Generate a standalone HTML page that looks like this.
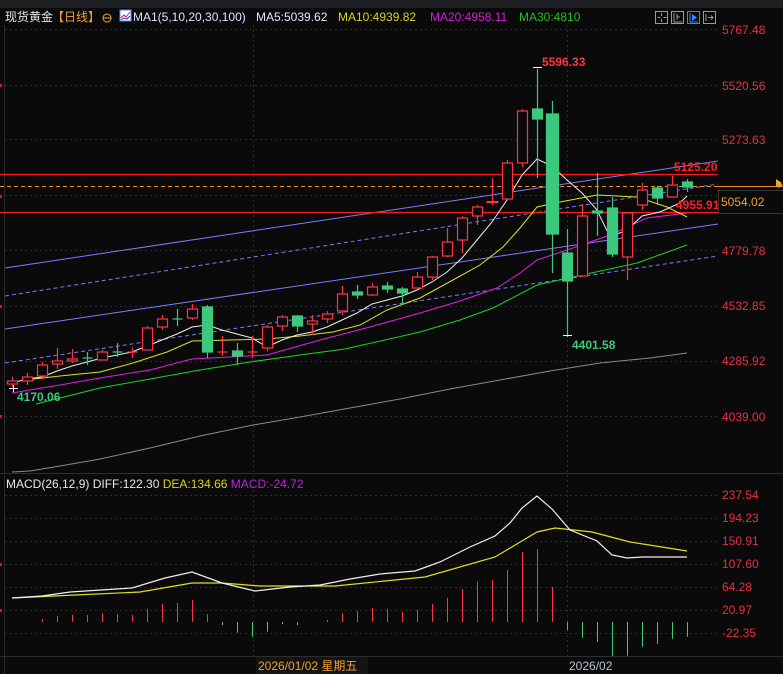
<!DOCTYPE html>
<html><head><meta charset="utf-8"><style>
html,body{margin:0;padding:0;background:#0a0a0a;width:783px;height:674px;overflow:hidden}
svg{display:block}
text{font-family:"Liberation Sans","Noto Sans CJK SC",sans-serif}
</style></head><body>
<svg width="783" height="674" viewBox="0 0 783 674" xmlns="http://www.w3.org/2000/svg">
<rect width="783" height="674" fill="#0a0a0a"/>
<rect width="783" height="8" fill="#1e1f22"/>
<!-- grid -->
<g stroke="#2c2c2c" stroke-dasharray="2,3" stroke-width="1">
<line x1="5" y1="29.5" x2="718" y2="29.5"/><line x1="5" y1="85.5" x2="718" y2="85.5"/><line x1="5" y1="139.5" x2="718" y2="139.5"/><line x1="5" y1="195.5" x2="718" y2="195.5"/><line x1="5" y1="250.5" x2="718" y2="250.5"/><line x1="5" y1="306.5" x2="718" y2="306.5"/><line x1="5" y1="361.5" x2="718" y2="361.5"/><line x1="5" y1="416.5" x2="718" y2="416.5"/>
<line x1="5" y1="495.5" x2="718" y2="495.5"/><line x1="5" y1="518.5" x2="718" y2="518.5"/><line x1="5" y1="541.5" x2="718" y2="541.5"/><line x1="5" y1="564.5" x2="718" y2="564.5"/><line x1="5" y1="587.5" x2="718" y2="587.5"/><line x1="5" y1="610.5" x2="718" y2="610.5"/><line x1="5" y1="633.5" x2="718" y2="633.5"/>
<line x1="253.5" y1="25" x2="253.5" y2="656"/><line x1="567.5" y1="25" x2="567.5" y2="656"/>
</g>
<line x1="4.5" y1="25" x2="4.5" y2="674" stroke="#2a2a2a"/>
<line x1="0" y1="473.5" x2="783" y2="473.5" stroke="#2e2e2e"/>
<line x1="0" y1="656.5" x2="783" y2="656.5" stroke="#2e2e2e"/>
<g fill="#c02030"><rect x="0" y="84" width="2" height="3"/><rect x="0" y="195" width="2" height="3"/><rect x="0" y="305" width="2" height="3"/><rect x="0" y="415" width="2" height="3"/><rect x="0" y="563" width="2" height="3"/><rect x="0" y="609" width="2" height="3"/></g>

<!-- channel lines -->
<g stroke="#7b7bff" stroke-width="1" fill="none">
<line x1="5" y1="268" x2="718" y2="161"/>
<line x1="5" y1="329" x2="718" y2="224"/>
<line x1="5" y1="296" x2="718" y2="184" stroke-dasharray="4,3"/>
<line x1="5" y1="363" x2="718" y2="256" stroke-dasharray="4,3"/>
</g>
<line x1="0" y1="174.5" x2="718" y2="174.5" stroke="#ff1a1a" stroke-width="1.2"/>
<line x1="0" y1="212.5" x2="718" y2="212.5" stroke="#ff1a1a" stroke-width="1.2"/>
<line x1="0" y1="186.5" x2="718" y2="186.5" stroke="#f08a20" stroke-dasharray="4,3"/>
<line x1="718" y1="186.5" x2="783" y2="186.5" stroke="#f08a20"/>

<!-- MAs -->
<g fill="none" stroke-width="1">
<polyline stroke="#8a8a8a" points="12,472 30,471 60,466 100,459 150,448 200,436 253,425 300,417 350,408 400,399 450,389 500,380 550,371 600,363 650,358 687,353"/>
<polyline stroke="#22d022" points="36,404 100,388 150,379 200,370 250,362 300,355 345,349 420,332 460,320 493,308 537,285 573,277 637,263 687,245"/>
<polyline stroke="#e020e0" points="12,393 60,385 100,378 150,370 192,359 267,355 320,340 370,327 420,313 460,301 497,288 520,273 537,260 573,248 610,235 647,218 687,213"/>
<polyline stroke="#e0e020" points="25,380 60,376 100,372 133,363 167,352 192,341 230,340 267,339 300,336 333,332 360,325 387,310 420,298 453,280 480,265 503,247 520,228 537,207 560,202 597,195 637,197 667,207 687,217"/>
<polyline stroke="#f0f0f0" points="12,383 27,379 42,377 57,371 72,366 87,362 102,358 117,355 132,352 147,346 162,340 177,334 192,327 207,325 222,330 237,334 252,338 267,347 282,340 297,335 312,332 327,327 342,320 357,313 372,304 387,300 402,296 417,290 432,282 447,272 462,258 477,240 492,222 507,200 522,175 537,159 552,166 567,180 582,193 597,210 610,237 627,230 642,216 660,212 680,203 687,196"/>
</g>

<!-- candles -->
<g stroke-width="1.2">
<g stroke="#ff3344" fill="#0a0a0a">
<line x1="12.5" y1="377" x2="12.5" y2="387"/><rect x="7.5" y="381" width="10" height="3"/>
<line x1="27.5" y1="373" x2="27.5" y2="385"/><rect x="22.5" y="377" width="10" height="4"/>
<line x1="42.5" y1="362" x2="42.5" y2="379"/><rect x="37.5" y="365" width="10" height="11"/>
<line x1="57.5" y1="348" x2="57.5" y2="369"/><rect x="52.5" y="361" width="10" height="3"/>
<line x1="72.5" y1="349" x2="72.5" y2="363"/><rect x="67.5" y="359" width="10" height="2"/>
<line x1="102.5" y1="350" x2="102.5" y2="360"/><rect x="97.5" y="352" width="10" height="8"/>
<line x1="132.5" y1="347" x2="132.5" y2="358"/><line x1="127.5" y1="352" x2="137.5" y2="352"/>
<line x1="147.5" y1="326" x2="147.5" y2="350"/><rect x="142.5" y="328" width="10" height="22"/>
<line x1="162.5" y1="315" x2="162.5" y2="330"/><rect x="157.5" y="319" width="10" height="8"/>
<line x1="192.5" y1="304" x2="192.5" y2="320"/><rect x="187.5" y="309" width="10" height="9"/>
<line x1="222.5" y1="336" x2="222.5" y2="356"/><line x1="217.5" y1="352" x2="227.5" y2="352"/>
<line x1="252.5" y1="336" x2="252.5" y2="358"/><line x1="247.5" y1="352" x2="257.5" y2="352"/>
<line x1="267.5" y1="325" x2="267.5" y2="351"/><rect x="262.5" y="327" width="10" height="21"/>
<line x1="282.5" y1="315" x2="282.5" y2="331"/><rect x="277.5" y="317" width="10" height="9"/>
<line x1="312.5" y1="315" x2="312.5" y2="335"/><rect x="307.5" y="321" width="10" height="3"/>
<line x1="327.5" y1="311" x2="327.5" y2="323"/><rect x="322.5" y="314" width="10" height="5"/>
<line x1="342.5" y1="286" x2="342.5" y2="315"/><rect x="337.5" y="294" width="10" height="17"/>
<line x1="372.5" y1="283" x2="372.5" y2="296"/><rect x="367.5" y="287" width="10" height="8"/>
<line x1="417.5" y1="272" x2="417.5" y2="288"/><rect x="412.5" y="277" width="10" height="11"/>
<line x1="432.5" y1="256" x2="432.5" y2="280"/><rect x="427.5" y="257" width="10" height="20"/>
<line x1="447.5" y1="228" x2="447.5" y2="257"/><rect x="442.5" y="242" width="10" height="14"/>
<line x1="462.5" y1="216" x2="462.5" y2="253"/><rect x="457.5" y="218" width="10" height="22"/>
<line x1="477.5" y1="205" x2="477.5" y2="225"/><rect x="472.5" y="207" width="10" height="9"/>
<line x1="492.5" y1="178" x2="492.5" y2="205"/><line x1="486.5" y1="202" x2="498.5" y2="202" stroke-width="2"/>
<line x1="507.5" y1="160" x2="507.5" y2="199"/><rect x="502.5" y="163" width="10" height="36"/>
<line x1="522.5" y1="109" x2="522.5" y2="167"/><rect x="517.5" y="111" width="10" height="52"/>
<line x1="582.5" y1="204" x2="582.5" y2="276"/><rect x="577.5" y="216" width="10" height="60"/>
<line x1="627.5" y1="213" x2="627.5" y2="280"/><rect x="622.5" y="213" width="10" height="44"/>
<line x1="642.5" y1="183" x2="642.5" y2="210"/><rect x="637.5" y="190" width="10" height="15"/>
<line x1="672.5" y1="176" x2="672.5" y2="197"/><rect x="667.5" y="185" width="10" height="12"/>
</g>
<g stroke="#3cc87d" fill="#3cc87d">
<line x1="87.5" y1="352" x2="87.5" y2="365"/><line x1="82.5" y1="358" x2="92.5" y2="358"/>
<line x1="117.5" y1="343" x2="117.5" y2="357"/><line x1="112.5" y1="352" x2="122.5" y2="352"/>
<line x1="177.5" y1="309" x2="177.5" y2="326"/><line x1="172.5" y1="319" x2="182.5" y2="319"/>
<line x1="207.5" y1="305" x2="207.5" y2="358"/><rect x="202.5" y="307" width="10" height="45"/>
<line x1="237.5" y1="343" x2="237.5" y2="365"/><rect x="232.5" y="351" width="10" height="5"/>
<line x1="297.5" y1="315" x2="297.5" y2="332"/><rect x="292.5" y="316" width="10" height="10"/>
<line x1="357.5" y1="285" x2="357.5" y2="299"/><rect x="352.5" y="292" width="10" height="3"/>
<line x1="387.5" y1="282" x2="387.5" y2="293"/><rect x="382.5" y="286" width="10" height="3"/>
<line x1="402.5" y1="287" x2="402.5" y2="305"/><rect x="397.5" y="289" width="10" height="4"/>
<line x1="537.5" y1="69" x2="537.5" y2="178"/><rect x="532.5" y="109" width="10" height="10"/>
<line x1="552.5" y1="101" x2="552.5" y2="273"/><rect x="546.5" y="114" width="12" height="120"/>
<line x1="567.5" y1="229" x2="567.5" y2="337"/><rect x="562.5" y="253" width="10" height="28"/>
<line x1="597.5" y1="173" x2="597.5" y2="236"/><rect x="592.5" y="211" width="10" height="2"/>
<line x1="612.5" y1="197" x2="612.5" y2="257"/><rect x="607.5" y="208" width="10" height="46"/>
<line x1="657.5" y1="186" x2="657.5" y2="205"/><rect x="652.5" y="188" width="10" height="10"/>
<line x1="687.5" y1="179" x2="687.5" y2="192"/><rect x="682.5" y="182" width="10" height="5"/>
</g>
</g>
<g stroke="#fff" stroke-width="1"><line x1="533" y1="67.5" x2="542" y2="67.5"/><line x1="563" y1="335.5" x2="572" y2="335.5"/><line x1="9" y1="388.5" x2="18" y2="388.5"/><line x1="13.5" y1="385" x2="13.5" y2="392"/></g>

<g font-size="12" font-weight="bold">
<text x="542" y="66" fill="#ff3344">5596.33</text>
<text x="572" y="349" fill="#3cc87d">4401.58</text>
<text x="17" y="401" fill="#3cc87d">4170.06</text>
<text x="674" y="171" fill="#ff2020">5125.20</text>
<text x="676" y="209" fill="#ff2020">4955.91</text>
</g>

<!-- right axis -->
<g font-size="12" fill="#e8303c">
<text x="722" y="34">5767.48</text><text x="722" y="90">5520.56</text><text x="722" y="144">5273.63</text>
<text x="722" y="255">4779.78</text><text x="722" y="310">4532.85</text><text x="722" y="365">4285.92</text><text x="722" y="421">4039.00</text>
<text x="722" y="499">237.54</text><text x="722" y="522">194.23</text><text x="722" y="545">150.91</text><text x="722" y="568">107.60</text><text x="722" y="591">64.28</text><text x="722" y="614">20.97</text><text x="722" y="637">-22.35</text>
</g>
<rect x="718.5" y="190.5" width="66" height="23" fill="#0a0a0a" stroke="#3a3a3a"/>
<text x="721" y="206" font-size="12" fill="#f0a030">5054.02</text>
<path d="M776 179 l6 4 l-6 4 z M778 182 l5 3 l-5 3z" fill="#f0a030"/>

<!-- header -->
<g font-size="12">
<text x="5" y="21" fill="#e8e8e8">现货黄金</text>
<text x="52" y="21" fill="#f0a030">【日线】</text>
<circle cx="107" cy="18" r="4" fill="none" stroke="#f0a030"/><line x1="103" y1="18" x2="111" y2="18" stroke="#f0a030"/>
<rect x="120" y="10" width="11" height="11" fill="#fff" stroke="#6080ff"/>
<path d="M121 18 l3 -3 l2 2 l4 -5" stroke="#e02020" fill="none"/><path d="M121 20 l3 -2 l3 1 l3 -3" stroke="#2040e0" fill="none"/>
<text x="133" y="21" fill="#d8e4ff">MA1(5,10,20,30,100)</text>
<text x="256" y="21" fill="#e0e8ff">MA5:5039.62</text>
<text x="338" y="21" fill="#d4d420">MA10:4939.82</text>
<text x="430" y="21" fill="#d020d0">MA20:4958.11</text>
<text x="519" y="21" fill="#20c020">MA30:4810</text>
</g>
<g fill="none" stroke="#9a9a9a">
<rect x="655.5" y="11.5" width="12" height="12"/><rect x="671.5" y="11.5" width="12" height="12"/><rect x="687.5" y="11.5" width="12" height="12" stroke="#2a8cff"/><rect x="703.5" y="11.5" width="12" height="12"/>
<path d="M661.5 13v3m0 3v3m-4-4.5h3m3 0h3"/><path d="M674 13v9h8m-5-8v6m0-3h3"/><path d="M690 13v9h8" stroke="#2a8cff"/><path d="M692 14l5 3.5l-5 3.5z" fill="#2a8cff" stroke="none"/><path d="M706 14v7m2-3.5h5m-2-2l2 2l-2 2"/>
</g>

<!-- MACD -->
<text x="6" y="488" font-size="12" fill="#e8e8e8">MACD(26,12,9) DIFF:122.30 <tspan fill="#d4d420">DEA:134.66</tspan> <tspan fill="#c020e0">MACD:-24.72</tspan></text>
<g stroke-width="1">
<g stroke="#ff3344">
<line x1="12.5" y1="622" x2="12.5" y2="621.7"/><line x1="27.5" y1="622" x2="27.5" y2="621.7"/><line x1="42.5" y1="622" x2="42.5" y2="619"/><line x1="57.5" y1="622" x2="57.5" y2="615.7"/><line x1="72.5" y1="622" x2="72.5" y2="615"/><line x1="87.5" y1="622" x2="87.5" y2="615"/><line x1="102.5" y1="622" x2="102.5" y2="613.3"/><line x1="117.5" y1="622" x2="117.5" y2="614"/><line x1="132.5" y1="622" x2="132.5" y2="615"/><line x1="147.5" y1="622" x2="147.5" y2="609"/><line x1="162.5" y1="622" x2="162.5" y2="604"/><line x1="177.5" y1="622" x2="177.5" y2="603"/><line x1="192.5" y1="622" x2="192.5" y2="600"/><line x1="207.5" y1="622" x2="207.5" y2="614"/>
<line x1="312.5" y1="622" x2="312.5" y2="621.7"/><line x1="327.5" y1="622" x2="327.5" y2="620"/><line x1="342.5" y1="622" x2="342.5" y2="613.3"/><line x1="357.5" y1="622" x2="357.5" y2="611"/><line x1="372.5" y1="622" x2="372.5" y2="607.7"/><line x1="387.5" y1="622" x2="387.5" y2="608.7"/><line x1="402.5" y1="622" x2="402.5" y2="612"/><line x1="417.5" y1="622" x2="417.5" y2="609.7"/><line x1="432.5" y1="622" x2="432.5" y2="604"/><line x1="447.5" y1="622" x2="447.5" y2="597.7"/><line x1="462.5" y1="622" x2="462.5" y2="589"/><line x1="477.5" y1="622" x2="477.5" y2="581.7"/><line x1="492.5" y1="622" x2="492.5" y2="580"/><line x1="507.5" y1="622" x2="507.5" y2="570"/><line x1="522.5" y1="622" x2="522.5" y2="552"/><line x1="537.5" y1="622" x2="537.5" y2="549"/><line x1="552.5" y1="622" x2="552.5" y2="587"/>
</g>
<g stroke="#3cc87d">
<line x1="222.5" y1="622" x2="222.5" y2="625"/><line x1="237.5" y1="622" x2="237.5" y2="632.7"/><line x1="252.5" y1="622" x2="252.5" y2="636.7"/><line x1="267.5" y1="622" x2="267.5" y2="631.7"/><line x1="282.5" y1="622" x2="282.5" y2="624.3"/><line x1="297.5" y1="622" x2="297.5" y2="625"/>
<line x1="567.5" y1="622" x2="567.5" y2="630"/><line x1="582.5" y1="622" x2="582.5" y2="637.7"/><line x1="597.5" y1="622" x2="597.5" y2="642"/><line x1="612.5" y1="622" x2="612.5" y2="656"/><line x1="627.5" y1="622" x2="627.5" y2="655.7"/><line x1="642.5" y1="622" x2="642.5" y2="646.7"/><line x1="657.5" y1="622" x2="657.5" y2="644"/><line x1="672.5" y1="622" x2="672.5" y2="638.7"/><line x1="687.5" y1="622" x2="687.5" y2="636.7"/>
</g>
</g>
<g fill="none" stroke-width="1.2">
<polyline stroke="#e0e020" points="12,598 75,595 140,592 192,583 222,583 260,586 335,586 425,577 495,557 537,532 555,528 592,532 630,542 687,551"/>
<polyline stroke="#f0f0f0" points="12,598 42,596 70,592 132,588 165,578 192,572 222,583 255,591 290,587 320,585 350,579 380,574 415,571 440,562 470,547 495,536 510,523 522,508 537,496 552,509 570,530 597,541 612,555 627,558 642,557 687,557"/>
</g>

<!-- bottom axis -->
<rect x="256" y="657" width="112" height="17" fill="#141414"/>
<text x="258" y="670" font-size="12" fill="#f0a030">2026/01/02 星期五</text>
<text x="569" y="670" font-size="12" fill="#b8c4d8">2026/02</text>
</svg>
</body></html>
